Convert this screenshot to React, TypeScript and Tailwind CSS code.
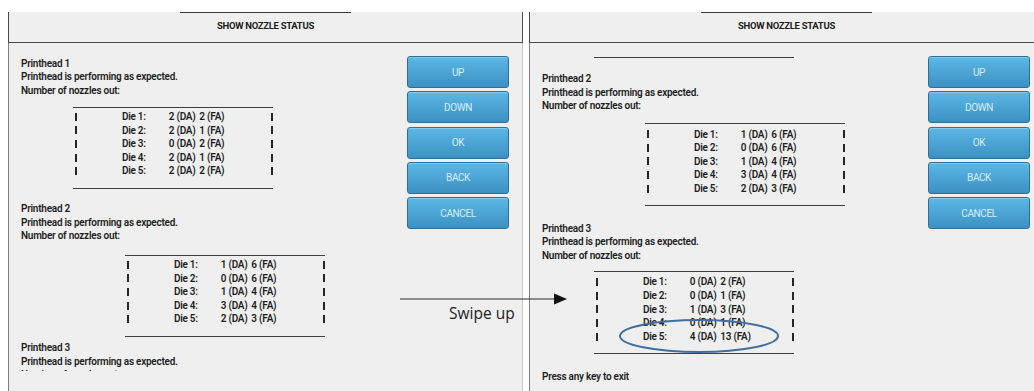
type Die = { die: string; da: string; fa: string };

const ph1: Die[] = [
  { die: 'Die 1:', da: '2 (DA)', fa: '2 (FA)' },
  { die: 'Die 2:', da: '2 (DA)', fa: '1 (FA)' },
  { die: 'Die 3:', da: '0 (DA)', fa: '2 (FA)' },
  { die: 'Die 4:', da: '2 (DA)', fa: '1 (FA)' },
  { die: 'Die 5:', da: '2 (DA)', fa: '2 (FA)' },
];

const ph2: Die[] = [
  { die: 'Die 1:', da: '1 (DA)', fa: '6 (FA)' },
  { die: 'Die 2:', da: '0 (DA)', fa: '6 (FA)' },
  { die: 'Die 3:', da: '1 (DA)', fa: '4 (FA)' },
  { die: 'Die 4:', da: '3 (DA)', fa: '4 (FA)' },
  { die: 'Die 5:', da: '2 (DA)', fa: '3 (FA)' },
];

const ph3: Die[] = [
  { die: 'Die 1:', da: '0 (DA)', fa: '2 (FA)' },
  { die: 'Die 2:', da: '0 (DA)', fa: '1 (FA)' },
  { die: 'Die 3:', da: '1 (DA)', fa: '3 (FA)' },
  { die: 'Die 4:', da: '0 (DA)', fa: '1 (FA)' },
  { die: 'Die 5:', da: '4 (DA)', fa: '13 (FA)' },
];

const buttons = ['UP', 'DOWN', 'OK', 'BACK', 'CANCEL'];

const Rule = ({ className = '' }: { className?: string }) => (
  <div className={`h-px w-[200px] bg-[#3f3f3f] ${className}`} />
);

// the little side markers of each die table
const Bar = () => <span className="inline-block h-[8px] w-[2px] bg-[#262626]" />;

const Status = ({ n, className = '' }: { n: number; className?: string }) => (
  <div className={`leading-[13.5px] ${className}`}>
    <div>Printhead {n}</div>
    <div>Printhead is performing as expected.</div>
    <div>Number of nozzles out:</div>
  </div>
);

const NozzleTable = ({ rows, className, rowsClassName }: { rows: Die[]; className: string; rowsClassName: string }) => (
  <div className={`w-[200px] ${className}`}>
    <Rule />
    <div className={rowsClassName}>
      {rows.map((r) => (
        <div key={r.die} className="flex h-[13.6px] items-center leading-[13.6px] whitespace-nowrap">
          <span className="flex w-[51px] pl-[2px]">
            <Bar />
          </span>
          <span className="w-[49px]">{r.die}</span>
          <span className="w-[32px]">{r.da}</span>
          <span className="w-[75px]">{r.fa}</span>
          <Bar />
        </div>
      ))}
    </div>
    <Rule />
  </div>
);

const ButtonColumn = () => (
  <div className="flex w-[102px] shrink-0 flex-col gap-[3.25px]">
    {buttons.map((b) => (
      <div
        key={b}
        className="flex h-[32px] items-center justify-center rounded-[3px] border border-[#2f6f97] bg-gradient-to-b from-[#5cb8e6] to-[#3b91c3] text-[10px] font-normal tracking-[-0.4px] text-[#d9eefa] shadow-[inset_0_1px_0_rgba(255,255,255,0.25)]"
      >
        {b}
      </div>
    ))}
  </div>
);

const Panel = ({ children }: { children: React.ReactNode }) => (
  <div className="flex h-[379px] w-[515px] shrink-0 flex-col bg-[#efefef]">
    <div className="flex h-[31px] flex-col border-x border-b border-[#4a4a4a]">
      <div className="mx-auto h-px w-[171px] bg-[#3a3a3a]" />
      <div className="flex flex-1 items-center justify-center pb-[3px] text-[9.5px] font-bold tracking-[-0.3px] text-[#1c1c1c]">
        SHOW NOZZLE STATUS
      </div>
    </div>
    <div className="flex flex-1 border-l border-l-[#7f7f7f] border-r border-r-[#c6c6c6] pl-[12px] pr-[13px] pt-[13px]">
      {children}
      <ButtonColumn />
    </div>
  </div>
);

export default function App() {
  return (
    <div className="relative h-[391px] w-[1034px] overflow-hidden bg-white font-['Roboto','Liberation_Sans',sans-serif] text-[10px] font-semibold tracking-[-0.25px] text-[#1e1e1e]">
      <div className="flex gap-[6px] pl-[8px] pt-[12px]">
        <Panel>
          <div className="-mt-[13px] h-[328px] w-[386px] shrink-0 overflow-hidden">
            <Status n={1} className="mt-[13.5px]" />
            <NozzleTable rows={ph1} className="ml-[52px] mt-[10px]" rowsClassName="pt-[2px] pb-[10px]" />
            <Status n={2} className="mt-[13.5px]" />
            <NozzleTable rows={ph2} className="ml-[104px] mt-[12px]" rowsClassName="pt-[2px] pb-[10px]" />
            <Status n={3} className="mt-[4.5px]" />
          </div>
        </Panel>
        <Panel>
          <div className="-mt-[13px] w-[386px] shrink-0">
            <Rule className="ml-[52px] mt-[13.5px]" />
            <Status n={2} className="mt-[14.5px]" />
            <NozzleTable rows={ph2} className="ml-[103px] mt-[10px]" rowsClassName="pt-[4px] pb-[10px]" />
            <Status n={3} className="mt-[15.5px]" />
            <NozzleTable rows={ph3} className="ml-[52px] mt-[9px]" rowsClassName="pt-[3px] pb-[10px]" />
            <div className="mt-[15.5px] leading-[13.5px]">Press any key to exit</div>
          </div>
        </Panel>
      </div>

      {/* annotation overlay: arrow, caption, highlight ring */}
      <svg className="absolute left-[400px] top-[293px]" width="170" height="12" viewBox="0 0 170 12">
        <line x1="0" y1="6" x2="156" y2="6" stroke="#2b2b2b" strokeWidth="1.2" />
        <polygon points="154,0.5 167,6 154,11.5" fill="#111" />
      </svg>
      <div className="absolute left-[449px] top-[303px] font-['Open_Sans',sans-serif] text-[15.5px] font-normal leading-[20px] tracking-normal text-[#222]">
        Swipe up
      </div>
      <svg className="absolute left-[616px] top-[316px]" width="166" height="40" viewBox="0 0 166 40">
        <ellipse cx="83" cy="20" rx="79" ry="16" fill="none" stroke="#3e6f9d" strokeWidth="2" />
      </svg>
    </div>
  );
}
